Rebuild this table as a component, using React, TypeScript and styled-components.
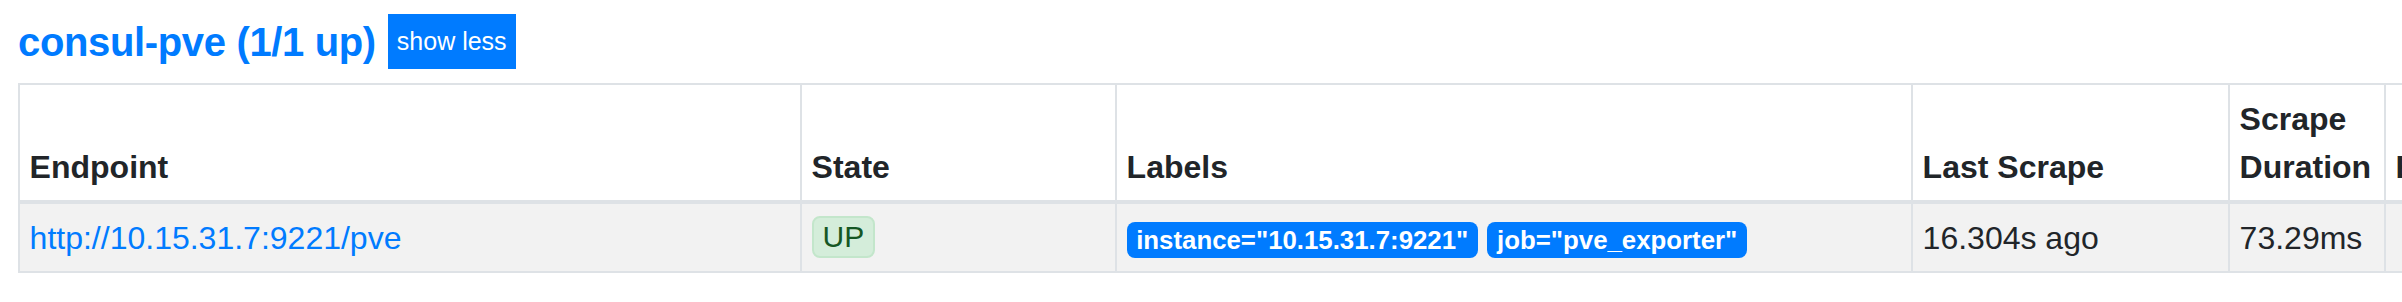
import React from "react";
import styled, { createGlobalStyle } from "styled-components";

const GlobalStyle = createGlobalStyle`
  html, body {
    margin: 0;
    padding: 0;
    background: #ffffff;
    overflow: hidden;
  }
  body {
    font-family: "Liberation Sans", Arial, sans-serif;
    color: #212529;
  }
`;

const Page = styled.div`
  padding: 14px 0 0 18px;
  width: max-content;
`;

const PoolHeader = styled.div`
  display: flex;
  align-items: center;
  gap: 12px;
  height: 55px;
`;

const PoolTitle = styled.a`
  font-size: 40px;
  font-weight: 700;
  letter-spacing: -0.35px;
  line-height: 1;
  color: #007bff;
  text-decoration: none;
`;

const ToggleButton = styled.button`
  height: 55px;
  padding: 0 9px;
  border: none;
  border-radius: 0;
  background: #007bff;
  color: #ffffff;
  font-family: "Liberation Sans", Arial, sans-serif;
  font-size: 25px;
  line-height: 1;
`;

const Table = styled.table`
  margin-top: 14px;
  border-collapse: collapse;
  table-layout: fixed;
  width: 2666px;
`;

const HeadCell = styled.th`
  padding: 9.6px;
  border: 2px solid #dee2e6;
  border-bottom-width: 4px;
  text-align: left;
  vertical-align: bottom;
  font-size: 32px;
  font-weight: 700;
  line-height: 48px;
  color: #212529;
`;

const Row = styled.tr`
  background: #f2f2f2;
`;

const Cell = styled.td`
  padding: 9.6px;
  border: 2px solid #dee2e6;
  vertical-align: top;
  font-size: 32px;
  line-height: 48px;
  color: #212529;
  white-space: nowrap;
`;

const EndpointLink = styled.a`
  color: #007bff;
  text-decoration: none;
`;

const StateBadge = styled.span`
  display: inline-block;
  box-sizing: border-box;
  vertical-align: top;
  margin-top: 2px;
  height: 42px;
  padding: 0 9px;
  border: 2px solid #c3e6cb;
  border-radius: 8px;
  background: #d4edda;
  color: #155724;
  font-size: 30px;
  line-height: 38px;
`;

const LabelBadge = styled.span`
  display: inline-block;
  vertical-align: middle;
  height: 36px;
  padding: 0 9.6px;
  margin-right: 9.6px;
  border-radius: 8px;
  background: #007bff;
  color: #ffffff;
  font-size: 25.8px;
  font-weight: 700;
  line-height: 36px;
`;

const columns = [
  { title: "Endpoint", width: 782 },
  { title: "State", width: 315 },
  { title: "Labels", width: 796 },
  { title: "Last Scrape", width: 317 },
  { title: "Scrape Duration", width: 156 },
  { title: "Error", width: 300 },
];

const labels = ['instance="10.15.31.7:9221"', 'job="pve_exporter"'];

export default function App() {
  return (
    <>
      <GlobalStyle />
      <Page>
        <PoolHeader>
          <PoolTitle href="#pool-consul-pve">consul-pve (1/1 up)</PoolTitle>
          <ToggleButton>show less</ToggleButton>
        </PoolHeader>
        <Table>
          <colgroup>
            {columns.map((c) => (
              <col key={c.title} style={{ width: c.width }} />
            ))}
          </colgroup>
          <thead>
            <tr>
              {columns.map((c) => (
                <HeadCell key={c.title}>{c.title}</HeadCell>
              ))}
            </tr>
          </thead>
          <tbody>
            <Row>
              <Cell>
                <EndpointLink href="#">http://10.15.31.7:9221/pve</EndpointLink>
              </Cell>
              <Cell>
                <StateBadge>UP</StateBadge>
              </Cell>
              <Cell>
                {labels.map((l) => (
                  <LabelBadge key={l}>{l}</LabelBadge>
                ))}
              </Cell>
              <Cell>16.304s ago</Cell>
              <Cell>73.29ms</Cell>
              <Cell></Cell>
            </Row>
          </tbody>
        </Table>
      </Page>
    </>
  );
}
